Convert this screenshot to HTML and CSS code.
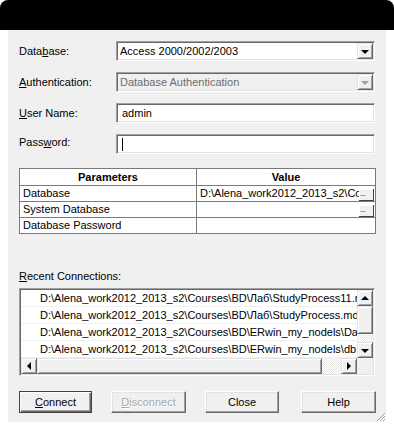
FILE: index.html
```html
<!DOCTYPE html>
<html lang="en">
<head>
    <meta charset="UTF-8">
    <meta name="viewport" content="width=device-width, initial-scale=1.0">
    <title>Connect</title>
    <link rel="stylesheet" href="styles.css">
</head>
<body>
    <div class="titlebar"></div>

    <div class="dialog">
        <!-- Connection fields -->
        <div class="form">
            <label class="lbl">Data<u>b</u>ase:</label>
            <div class="combo">
                <span class="combo-text">Access 2000/2002/2003</span>
                <span class="drop"><i class="arrow-down"></i></span>
            </div>

            <label class="lbl"><u>A</u>uthentication:</label>
            <div class="combo disabled">
                <span class="combo-text">Database Authentication</span>
                <span class="drop"><i class="arrow-down"></i></span>
            </div>

            <label class="lbl"><u>U</u>ser Name:</label>
            <div class="edit"><span class="edit-text">admin</span></div>

            <label class="lbl lbl-up">Pass<u>w</u>ord:</label>
            <div class="edit"><span class="caret"></span></div>
        </div>

        <!-- Parameters grid -->
        <table class="params">
            <tr>
                <th class="col-name">Parameters</th>
                <th>Value</th>
            </tr>
            <tr>
                <td>Database</td>
                <td><div class="value"><span class="value-text">D:\Alena_work2012_2013_s2\Courses\BD\Лаб\StudyProcess11.mdb</span><span class="dots">...</span></div></td>
            </tr>
            <tr>
                <td>System Database</td>
                <td><div class="value"><span class="value-text"></span><span class="dots">...</span></div></td>
            </tr>
            <tr>
                <td>Database Password</td>
                <td></td>
            </tr>
        </table>

        <!-- Recent connections -->
        <div class="recent-lbl"><u>R</u>ecent Connections:</div>
        <div class="listbox">
            <div class="list-main">
                <div class="rows">
                    <div class="row">D:\Alena_work2012_2013_s2\Courses\BD\Лаб\StudyProcess11.mdb</div>
                    <div class="row">D:\Alena_work2012_2013_s2\Courses\BD\Лаб\StudyProcess.mdb</div>
                    <div class="row">D:\Alena_work2012_2013_s2\Courses\BD\ERwin_my_nodels\Database1.mdb</div>
                    <div class="row">D:\Alena_work2012_2013_s2\Courses\BD\ERwin_my_nodels\db11.mdb</div>
                </div>
                <div class="vscroll">
                    <span class="sbtn"><i class="arrow-up"></i></span>
                    <span class="vthumb"></span>
                    <span class="track"></span>
                    <span class="sbtn"><i class="arrow-down"></i></span>
                </div>
            </div>
            <div class="hscroll-row">
                <div class="hscroll">
                    <span class="sbtn"><i class="arrow-left"></i></span>
                    <span class="hthumb"></span>
                    <span class="track"></span>
                    <span class="sbtn"><i class="arrow-right"></i></span>
                </div>
                <div class="corner"></div>
            </div>
        </div>

        <!-- Buttons -->
        <div class="buttons">
            <button class="btn btn-default btn-connect"><u>C</u>onnect</button>
            <button class="btn btn-disconnect" disabled><u>D</u>isconnect</button>
            <button class="btn btn-close">Close</button>
            <button class="btn btn-help">Help</button>
        </div>

        <svg class="grip" width="10" height="10" viewBox="0 0 10 10">
            <path d="M9 1L1 9M9 4L4 9M9 7L7 9" stroke="#a0a0a0" stroke-width="1"/>
            <path d="M10 2L2 10M10 5L5 10M10 8L8 10" stroke="#ffffff" stroke-width="1"/>
        </svg>
    </div>
</body>
</html>
```

FILE: styles.css
```css
body {
    margin: 0;
    background: #fff;
    font-family: "Liberation Sans", Arial, sans-serif;
    font-size: 11px;
    color: #000;
}

u {
    text-decoration: underline;
    text-underline-offset: 1px;
}

.titlebar {
    height: 30px;
    background: #000;
    border-radius: 8px 8px 0 0;
}

.dialog {
    position: relative;
    margin: 0 8px;
    height: 392px;
    box-sizing: border-box;
    padding: 11px 10px 0 11px;
    background: #f0f0f0;
}

/* form rows */
.form {
    display: grid;
    grid-template-columns: 97px 259px;
    grid-auto-rows: 20px;
    row-gap: 11px;
    align-items: center;
}

.lbl {
    line-height: 14px;
}

.lbl-up {
    margin-top: -4px;
}

.combo,
.edit {
    height: 20px;
    box-sizing: border-box;
    display: flex;
    align-items: center;
    padding: 1px 1px 1px 3px;
    background: #fff;
    border: 1px solid;
    border-color: #a0a0a0 #fff #fff #a0a0a0;
    box-shadow: inset 1px 1px #696969, inset -1px -1px #e3e3e3;
}

.combo-text {
    flex: 1;
    white-space: nowrap;
    overflow: hidden;
}

.combo.disabled {
    background: #f0f0f0;
    color: #6d6d6d;
}

.drop {
    width: 16px;
    height: 16px;
    box-sizing: border-box;
    display: flex;
    align-items: center;
    justify-content: center;
    background: #f0f0f0;
    border: 1px solid;
    border-color: #e3e3e3 #696969 #696969 #e3e3e3;
    box-shadow: inset 1px 1px #fff, inset -1px -1px #a0a0a0;
}

.combo.disabled .drop {
    color: #a0a0a0;
}

.edit-text {
    padding-left: 2px;
}

.caret {
    width: 1px;
    height: 13px;
    margin-left: 2px;
    background: #000;
}

/* arrows */
.arrow-down,
.arrow-up,
.arrow-left,
.arrow-right {
    display: block;
    width: 0;
    height: 0;
}

.arrow-down {
    border-top: 4px solid currentColor;
    border-left: 4px solid transparent;
    border-right: 4px solid transparent;
    margin-top: 1px;
}

.arrow-up {
    border-bottom: 4px solid currentColor;
    border-left: 4px solid transparent;
    border-right: 4px solid transparent;
    margin-bottom: 1px;
}

.arrow-left {
    border-right: 4px solid currentColor;
    border-top: 4px solid transparent;
    border-bottom: 4px solid transparent;
}

.arrow-right {
    border-left: 4px solid currentColor;
    border-top: 4px solid transparent;
    border-bottom: 4px solid transparent;
}

/* parameters grid */
.params {
    margin-top: 14px;
    width: 357px;
    border-collapse: collapse;
    table-layout: fixed;
    background: #fff;
}

.params th,
.params td {
    border: 1px solid #7a7a7a;
    padding: 0 3px;
    height: 15px;
    line-height: 15px;
    white-space: nowrap;
    overflow: hidden;
}

.params th {
    height: 16px;
    font-weight: bold;
    text-align: center;
}

.params .col-name {
    width: 170px;
}

.value {
    display: flex;
    align-items: flex-end;
    height: 15px;
    margin-right: -2px;
}

.value-text {
    flex: 1;
    overflow: hidden;
    white-space: nowrap;
}

.dots {
    width: 15px;
    height: 12px;
    box-sizing: border-box;
    font-size: 8px;
    line-height: 10px;
    padding-left: 1px;
    letter-spacing: -0.5px;
    background: #f0f0f0;
    border-right: 1px solid #404040;
    border-bottom: 1px solid #404040;
    box-shadow: inset 1px 1px #fff;
}

/* recent connections */
.recent-lbl {
    margin-top: 35px;
    line-height: 14px;
}

.listbox {
    margin-top: 5px;
    width: 356px;
    box-sizing: border-box;
    background: #fff;
    border: 1px solid;
    border-color: #a0a0a0 #fff #fff #a0a0a0;
    box-shadow: inset 1px 1px #696969, inset -1px -1px #e3e3e3;
    padding: 1px;
}

.list-main {
    display: flex;
}

.rows {
    flex: 1;
    overflow: hidden;
}

.row {
    height: 16px;
    line-height: 16px;
    padding-left: 19px;
    white-space: nowrap;
    border-bottom: 1px solid #f0f0f0;
}

.vscroll {
    width: 16px;
    display: flex;
    flex-direction: column;
}

.sbtn {
    width: 16px;
    height: 16px;
    flex: none;
    box-sizing: border-box;
    display: flex;
    align-items: center;
    justify-content: center;
    background: #f0f0f0;
    border: 1px solid;
    border-color: #e3e3e3 #696969 #696969 #e3e3e3;
    box-shadow: inset 1px 1px #fff, inset -1px -1px #a0a0a0;
}

.vthumb,
.hthumb {
    box-sizing: border-box;
    background: #f0f0f0;
    border: 1px solid;
    border-color: #e3e3e3 #696969 #696969 #e3e3e3;
    box-shadow: inset 1px 1px #fff, inset -1px -1px #a0a0a0;
}

.vthumb {
    height: 28px;
}

.track {
    flex: 1;
    background: repeating-conic-gradient(#fff 0 25%, #e8e8e8 0 50%) 0 0 / 2px 2px;
}

.hscroll-row {
    display: flex;
}

.hscroll {
    flex: 1;
    height: 16px;
    display: flex;
}

.hthumb {
    width: 285px;
}

.corner {
    width: 16px;
    height: 16px;
    background: #f0f0f0;
}

/* buttons */
.buttons {
    display: flex;
    margin-top: 15px;
}

.btn {
    height: 22px;
    box-sizing: border-box;
    padding: 0;
    font-family: inherit;
    font-size: 11px;
    color: #000;
    background: #f0f0f0;
    border: 1px solid;
    border-color: #fff #696969 #696969 #fff;
    box-shadow: inset -1px -1px #a0a0a0, inset 1px 1px #e3e3e3;
}

.btn-default {
    border-color: #404040;
    box-shadow: inset 1px 1px #fff, inset -1px -1px #696969, inset -2px -2px #a0a0a0;
}

.btn-connect {
    width: 73px;
}

.btn-disconnect {
    width: 75px;
    margin-left: 19px;
    color: #a8a8a8;
    text-shadow: 1px 1px #fff;
}

.btn-close {
    width: 74px;
    margin-left: 19px;
}

.btn-help {
    width: 75px;
    margin-left: 22px;
}

.grip {
    position: absolute;
    right: 0;
    bottom: 0;
}
```
